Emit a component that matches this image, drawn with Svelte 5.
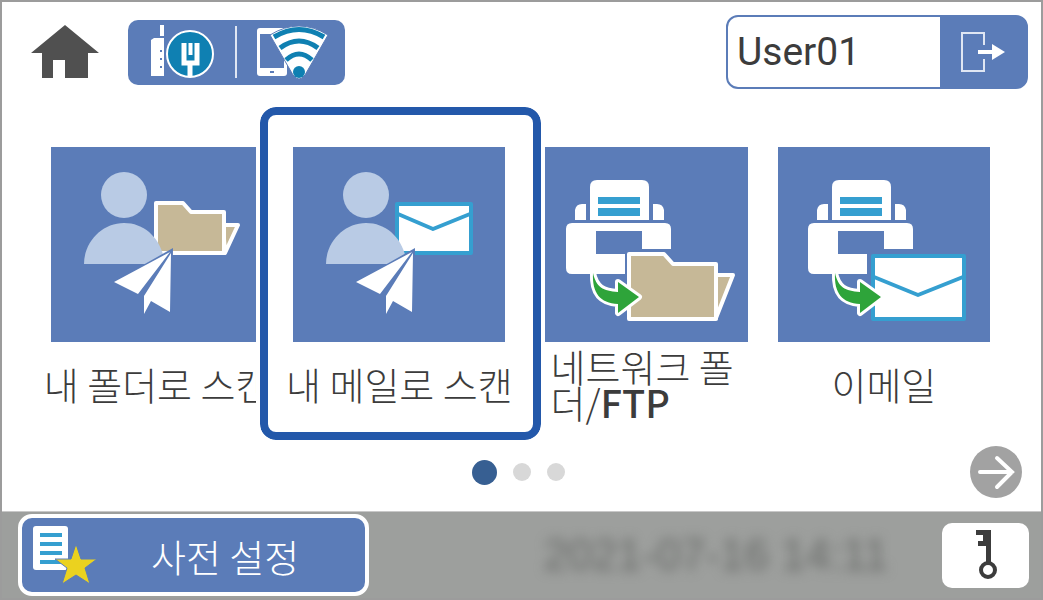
<script>
    const tiles = [
        { label: '내 폴더로 스캔', source: 'user', target: 'folder' },
        { label: '내 메일로 스캔', source: 'user', target: 'mail' },
        { label: '네트워크 폴더/', suffix: 'FTP', source: 'printer', target: 'folder' },
        { label: '이메일', source: 'printer', target: 'mail' }
    ];
    const pages = [1, 2, 3];

    let selected = 1;
    let page = 1;
    let user = 'User01';

    function nextPage() {
        page = page % pages.length + 1;
    }
</script>

<main class="screen">
    <header>
        <button class="home" aria-label="홈">
            <svg width="68" height="54" viewBox="0 0 68 54">
                <path d="M34 0 68 28H57V53H34V35H22V53H11V28H0Z" fill="#505050" />
            </svg>
        </button>

        <button class="connection" aria-label="연결">
            <svg width="86" height="56" viewBox="4 1 86 56">
                <path d="M29 2h4v11h-4zM20 17l3-2h10v38H20z" fill="#fff" />
                <path d="M29 27h2v2h-2zM29 35h2v2h-2zM29 43h2v2h-2z" fill="#5b7cb8" />
                <circle cx="59" cy="31" r="23" fill="#0f80b2" stroke="#fff" stroke-width="2" />
                <path d="M53 20v20h13V20M59 40v14" fill="none" stroke="#fff" stroke-width="5" />
                <path d="M57.500 20h4v12h-4z" fill="#fff" />
            </svg>
            <span class="divider"></span>
            <svg width="86" height="56" viewBox="5 1 86 56">
                <rect x="10" y="5" width="30" height="48" rx="3" fill="#fff" />
                <path d="M13 11h24v34H13z" fill="#5b7cb8" />
                <path d="M23 48h4v2h-4z" fill="#5b7cb8" />
                <path d="M23 12Q52-6 81 12L58 52Q52 60 46 52Z" fill="#fff" stroke="#5b7cb8" />
                <g fill="none" stroke="#0f80b2" stroke-width="5">
                    <path d="M27 14Q52-1 77 14" />
                    <path d="M33 25Q52 11 71 25" />
                    <path d="M39 37Q52 25 65 37" />
                </g>
                <circle cx="52" cy="49" r="6" fill="#0f80b2" />
            </svg>
        </button>

        <div class="account">
            <input type="text" aria-label="사용자" bind:value={user} />
            <button class="logout" aria-label="로그아웃">
                <svg width="46" height="42" viewBox="0 0 46 42">
                    <path d="M24 14V2H2v38h22V28" fill="none" stroke="#dfe6f3" stroke-width="2" />
                    <path d="M18 19h14v-6l13 8-13 8v-6H18z" fill="#fff" />
                </svg>
            </button>
        </div>
    </header>

    <div class="tiles">
        {#each tiles as tile, i}
            <button class="tile" class:selected={selected === i} on:click={() => selected = i}>
                <svg class="picture" width="212" height="195" viewBox="0 0 212 195">
                    {#if tile.source === 'user'}
                        {#if tile.target === 'folder'}
                            <g fill="#c6b897" stroke="#fff" stroke-width="4" stroke-linejoin="round">
                                <path d="M172 78H187L174 106Z" />
                                <path d="M105 56H132L140 65H173V106H105Z" />
                            </g>
                        {:else}
                            <g fill="#fff" stroke="#359fd0" stroke-width="4" stroke-linejoin="round">
                                <path d="M104 57H178V106H104Z" />
                                <path d="M105 67 140 82 177 67" />
                            </g>
                        {/if}
                        <circle cx="73" cy="48" r="23" fill="#b9cbe5" />
                        <path d="M33 117C33 95 51 76 73 76S111 93 114 117Z" fill="#b9cbe5" />
                        <path d="M122 101 62 135 87 149 93 146V168L101 155 121 166Z" fill="#5b7cb8" />
                        <path d="M119 105 63 135 87 147ZM120 106 93 149V167L100 154 119 165Z" fill="#fff" />
                    {:else}
                        <g fill="#fff">
                            <path d="M54 73V40Q54 33 61 33H106Q113 33 113 40V73Z" />
                            <path d="M39 73V63Q40 57 46 57H50V73ZM117 57H121Q127 57 128 63V73H117Z" />
                            <path d="M36 76H129Q135 76 135 82V102H106V84H60V107H89V127H36Q30 127 30 121V82Q30 76 36 76Z" />
                        </g>
                        <path d="M62 50H104V57H62ZM62 61H104V69H62Z" fill="#359fd0" />
                        {#if tile.target === 'folder'}
                            <g fill="#c6b897" stroke="#fff" stroke-width="4" stroke-linejoin="round">
                                <path d="M178 128H197L180 171Z" />
                                <path d="M93 107H128L137 117H180V172H93Z" />
                            </g>
                        {:else}
                            <g fill="#fff" stroke="#359fd0" stroke-width="4" stroke-linejoin="round">
                                <path d="M95 109H186V172H95Z" />
                                <path d="M96 130 140 148 185 130" />
                            </g>
                        {/if}
                        <path
                            class="arrow"
                            d="M57 126C60 140 67 144 82 145V135L103 150 82 166V157C64 156 56 146 57 126Z"
                        />
                    {/if}
                </svg>
                <span class="label" class:long={tile.suffix}>
                    <span>{tile.label}{#if tile.suffix}<b>{tile.suffix}</b>{/if}</span>
                </span>
            </button>
        {/each}
    </div>

    <nav>
        <div class="dots">
            {#each pages as number}
                <button
                    class="dot"
                    class:current={page === number}
                    aria-label="페이지 {number}"
                    on:click={() => page = number}
                ></button>
            {/each}
        </div>
        <button class="next" aria-label="다음" on:click={nextPage}>
            <svg width="52" height="52" viewBox="0 0 52 52">
                <path d="M10 26H42M27 12 42 26 27 41" fill="none" stroke="#fff" stroke-width="4" stroke-linecap="round" />
            </svg>
        </button>
    </nav>

    <footer>
        <button class="preset">
            <svg width="66" height="60" viewBox="0 0 66 60">
                <rect x="1" y="1" width="35" height="44" rx="3" fill="#fff" />
                <path d="M8 8H30V12H8ZM8 17H30V21H8ZM8 26H30V30H8ZM8 35H30V39H8Z" fill="#359fd0" />
                <path
                    d="M44 19 49 34H65L53 43 58 59 44 50 30 59 35 43 23 34H39Z"
                    fill="#ebd21f"
                    stroke="#5b7cb8"
                />
            </svg>
            <span>사전 설정</span>
        </button>
        <time>2021-07-16 14:11</time>
        <button class="key" aria-label="잠금">
            <svg width="24" height="52" viewBox="0 0 24 52">
                <path d="M2 1H17V33H12V17H4V12H9V6H2Z" fill="#3c3c3c" />
                <circle cx="14" cy="41" r="7" fill="none" stroke="#3c3c3c" stroke-width="4" />
            </svg>
        </button>
    </footer>
</main>

<style>
    :global(body) {
        margin: 0;
        background: #fff;
    }

    .screen {
        box-sizing: border-box;
        min-height: 100vh;
        display: flex;
        flex-direction: column;
        border: 2px solid #9c9c9c;
        background: #fff;
        color: #3c3c3c;
        font-family: "Noto Sans CJK KR", sans-serif;
        font-weight: 300;
        overflow: hidden;
    }

    button {
        padding: 0;
        border: none;
        background: none;
        color: inherit;
        font: inherit;
        cursor: pointer;
    }

    svg {
        display: block;
    }

    header {
        display: flex;
        align-items: center;
        padding: 13px 13px 0 29px;
    }

    .connection {
        display: flex;
        align-items: center;
        justify-content: space-around;
        width: 217px;
        height: 65px;
        margin-left: 29px;
        border-radius: 10px;
        background: #5b7cb8;
    }

    .divider {
        width: 2px;
        height: 52px;
        background: #dfe6f3;
    }

    .account {
        box-sizing: border-box;
        display: flex;
        width: 302px;
        height: 74px;
        margin-left: auto;
        border: 2px solid #5b7cb8;
        border-radius: 12px;
        background: #5b7cb8;
    }

    input {
        flex: 1;
        min-width: 0;
        padding: 0 9px;
        border: none;
        border-radius: 10px 0 0 10px;
        background: #fff;
        color: #3c3c3c;
        font: 39px Roboto, "Liberation Sans", sans-serif;
    }

    .logout {
        display: flex;
        align-items: center;
        justify-content: center;
        width: 86px;
    }

    .tiles {
        display: grid;
        grid-template-columns: repeat(4, 1fr);
        padding: 58px 36px 0 34px;
    }

    .tile {
        position: relative;
        display: flex;
        flex-direction: column;
        align-items: center;
    }

    .selected {
        z-index: 1;
    }

    .selected::before {
        content: "";
        position: absolute;
        z-index: -1;
        inset: -40px -20px -14px -18px;
        border: 8px solid #2358aa;
        border-radius: 16px;
        background: #fff;
        outline: 4px solid #fff;
    }

    .picture {
        background: #5b7cb8;
    }

    .arrow {
        fill: #2ea43a;
        stroke: #fff;
        stroke-width: 6px;
        stroke-linejoin: round;
        paint-order: stroke;
    }

    .label {
        display: flex;
        align-items: center;
        height: 84px;
        font-size: 38px;
        line-height: 36px;
        white-space: nowrap;
    }

    .long {
        padding-left: 30px;
        text-align: left;
        white-space: normal;
    }

    .label b {
        font-weight: 500;
    }

    nav {
        display: grid;
        grid-template-columns: 1fr auto 1fr;
        align-items: center;
        padding: 20px 19px 13px 13px;
    }

    .dots {
        grid-column: 2;
        display: flex;
        align-items: center;
        gap: 16px;
    }

    .dot {
        width: 18px;
        height: 18px;
        border-radius: 50%;
        background: #d8d8d8;
    }

    .current {
        width: 25px;
        height: 25px;
        background: #375f92;
    }

    .next {
        justify-self: end;
        border-radius: 50%;
        background: #a2a2a2;
    }

    footer {
        flex: 1;
        display: flex;
        align-items: center;
        padding: 0 12px 0 16px;
        border-top: 1px solid #c8c8c8;
        background: #9d9f9d;
    }

    .preset {
        display: flex;
        align-items: center;
        gap: 53px;
        box-sizing: border-box;
        width: 351px;
        height: 82px;
        padding-left: 10px;
        border: 4px solid #fff;
        border-radius: 14px;
        background: #5b7cb8;
        color: #fff;
        font-size: 38px;
    }

    time {
        margin-left: auto;
        margin-right: 54px;
        color: #686a68;
        font: 44px "Liberation Sans", sans-serif;
        filter: blur(6px);
    }

    .key {
        display: flex;
        align-items: center;
        justify-content: center;
        width: 87px;
        height: 65px;
        border-radius: 10px;
        background: #fff;
    }
</style>
